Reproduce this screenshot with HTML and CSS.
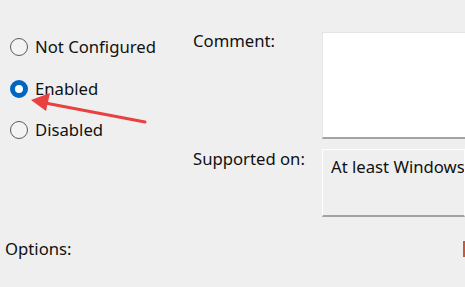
FILE: index.html
```html
<!DOCTYPE html>
<html>
<head>
<meta charset="utf-8">
<link rel="stylesheet" href="styles.css">
</head>
<body>
<div class="page">
  <div class="top">
    <div class="states">
      <label class="radio"><span class="dot"></span><span>Not Configured</span></label>
      <label class="radio"><span class="dot on"></span><span>Enabled</span></label>
      <label class="radio"><span class="dot"></span><span>Disabled</span></label>
    </div>
    <div class="fields">
      <div class="label">Comment:</div>
      <div class="comment"></div>
      <div class="label sup">Supported on:</div>
      <div class="supported">At least Windows</div>
    </div>
  </div>
  <div class="bottom">
    <div class="label">Options:</div>
    <div class="mark"></div>
  </div>
  <svg class="arrow" width="160" height="40" viewBox="0 0 160 40">
    <line x1="145" y1="31" x2="40" y2="11" stroke="#e8413f" stroke-width="3" stroke-linecap="round"/>
    <polygon points="31,9 50,2 46,20" fill="#e8413f"/>
  </svg>
</div>
</body>
</html>
```
FILE: styles.css
```css
html, body {
  margin: 0;
  padding: 0;
  background: #efefef;
}
body {
  font-family: "Noto Sans", "Open Sans", sans-serif;
  font-size: 16.7px;
  color: #111111;
  width: 465px;
  height: 287px;
  overflow: hidden;
}
.page {
  position: relative;
  width: 465px;
  height: 287px;
}
.top {
  display: flex;
}
.states {
  width: 193px;
  padding-top: 36px;
  padding-left: 10px;
  box-sizing: border-box;
  display: flex;
  flex-direction: column;
  gap: 19.5px;
}
.radio {
  display: flex;
  align-items: center;
  gap: 7px;
  height: 22px;
  line-height: 22px;
}
.dot {
  width: 18px;
  height: 18px;
  box-sizing: border-box;
  border: 1.5px solid #5b5b5b;
  border-radius: 50%;
  background: #f3f3f3;
  flex: none;
}
.dot.on {
  border: 5px solid #0067c0;
  background: #ffffff;
}
.fields {
  flex: 1;
  min-width: 0;
  display: grid;
  grid-template-columns: 129px minmax(0, 1fr);
  grid-template-rows: 107px 68px;
  row-gap: 10px;
  padding-top: 32px;
}
.label {
  line-height: 18px;
  white-space: nowrap;
}
.comment {
  background: #ffffff;
  border-top: 1px solid #e4e4e4;
  border-left: 1px solid #e4e4e4;
  border-bottom: 2px solid #a3a3a3;
  box-sizing: border-box;
}
.sup {
  padding-top: 1px;
}
.supported {
  border: 1px solid #ffffff;
  border-bottom: 2px solid #a3a3a3;
  box-sizing: border-box;
  padding: 6px 8px;
  line-height: 22px;
  white-space: nowrap;
  overflow: hidden;
}
.bottom {
  display: flex;
  justify-content: space-between;
  align-items: center;
  padding: 23px 0 0 5px;
}
.mark {
  width: 2px;
  height: 16px;
  background: #c4593b;
}
.arrow {
  position: absolute;
  left: 0;
  top: 91px;
}
```
